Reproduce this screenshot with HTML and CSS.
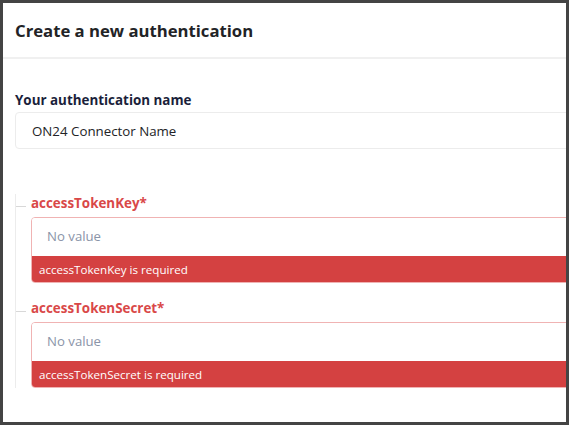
FILE: index.html
```html
<!DOCTYPE html>
<html>
<head>
<meta charset="utf-8">
<link rel="stylesheet" href="styles.css">
</head>
<body>
<div class="frame">
  <div class="header"><h1 class="title">Create a new authentication</h1></div>
  <div class="form">
    <label class="name-label">Your authentication name</label>
    <div class="name-input">ON24 Connector Name</div>
    <div class="group">
      <div class="field">
        <div class="field-label">accessTokenKey*</div>
        <div class="field-box">
          <div class="field-value">No value</div>
          <div class="field-error">accessTokenKey is required</div>
        </div>
      </div>
      <div class="field">
        <div class="field-label">accessTokenSecret*</div>
        <div class="field-box">
          <div class="field-value">No value</div>
          <div class="field-error">accessTokenSecret is required</div>
        </div>
      </div>
    </div>
  </div>
</div>
</body>
</html>
```
FILE: styles.css
```css
html, body {
  margin: 0;
  padding: 0;
  background: #444444;
}
body {
  font-family: "Open Sans", "Noto Sans", sans-serif;
  padding: 3px;
  width: 569px;
  height: 425px;
  box-sizing: border-box;
}
.frame {
  width: 563px;
  height: 419px;
  background: #ffffff;
  overflow: hidden;
}
.header {
  padding: 17px 12px 15px;
  border-bottom: 2px solid #f0f0f0;
  width: 600px;
}
.title {
  margin: 0;
  font-size: 16.7px;
  line-height: 22px;
  font-weight: 700;
  color: #222326;
}
.form {
  padding: 32px 0 0 12px;
  width: 620px;
}
.name-label {
  display: block;
  font-size: 13.4px;
  line-height: 18px;
  font-weight: 700;
  color: #1b1f3b;
}
.name-input {
  margin-top: 3px;
  height: 37px;
  box-sizing: border-box;
  border: 1px solid #ececec;
  border-radius: 4px;
  padding-left: 16px;
  display: flex;
  align-items: center;
  font-size: 13.3px;
  color: #222326;
}
.group {
  margin-top: 45px;
  border-left: 1px solid #ececec;
  display: flex;
  flex-direction: column;
  gap: 16px;
}
.field {
  position: relative;
  padding-left: 15px;
}
.field::before {
  content: "";
  position: absolute;
  left: 0;
  top: 12px;
  width: 10px;
  border-top: 1px solid #d8d8d8;
}
.field-label {
  font-size: 13.4px;
  line-height: 18px;
  font-weight: 700;
  color: #d94848;
  margin-bottom: 5px;
}
.field-box {
  border: 1px solid #f0b3b3;
  border-radius: 4px;
  overflow: hidden;
}
.field-value {
  height: 38px;
  padding-left: 15px;
  padding-bottom: 2px;
  box-sizing: border-box;
  display: flex;
  align-items: center;
  font-size: 13.2px;
  color: #8a94a8;
  background: #fff;
}
.field-error {
  height: 26px;
  background: #d44141;
  color: #ffffff;
  font-size: 11.6px;
  padding-left: 7px;
  display: flex;
  align-items: center;
}
```
